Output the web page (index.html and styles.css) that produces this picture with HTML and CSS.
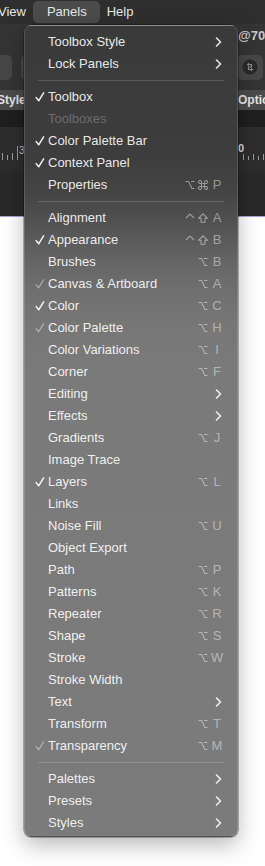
FILE: index.html
```html
<!DOCTYPE html>
<html>
<head>
<meta charset="utf-8">
<link rel="stylesheet" href="styles.css">
</head>
<body>
<div class="app">
  <div class="menubar">
    <span class="mb-item mb-view">View</span>
    <span class="mb-item mb-active">Panels</span>
    <span class="mb-item">Help</span>
  </div>
  <div class="toolbar">
    <div class="doc-title">@70.8%</div>
    <div class="tools">
      <div class="btn btn-a"></div>
      <div class="btn btn-b"></div>
      <div class="spacer"></div>
      <div class="btn btn-icon">
        <svg width="16" height="16" viewBox="0 0 16 16">
          <circle cx="8" cy="8" r="7" fill="#2b2b2b" stroke="#232323" stroke-width="1"/>
          <path d="M5 5.5h4.5v2.5h-3v2.5h4.5M6.5 4v3M9.5 9v3" fill="none" stroke="#8a8a8a" stroke-width="1.1"/>
        </svg>
      </div>
    </div>
  </div>
  <div class="labels">
    <span class="lbl lbl-left">Style</span>
    <span class="lbl lbl-right">Options</span>
  </div>
  <div class="strip"></div>
  <div class="ruler">
    <svg class="ruler-left" width="24" height="45" viewBox="0 0 24 45">
      <g stroke="#9a9a9a" stroke-width="1">
        <line x1="2.5" y1="26" x2="2.5" y2="33"/>
        <line x1="7.5" y1="28" x2="7.5" y2="33"/>
        <line x1="12.5" y1="26" x2="12.5" y2="33"/>
        <line x1="17.5" y1="19" x2="17.5" y2="33"/>
      </g>
      <text x="19" y="27" fill="#c8c8c8" font-size="10" font-family="Liberation Sans, Arial, sans-serif">3</text>
    </svg>
    <div class="spacer"></div>
    <svg class="ruler-right" width="29" height="45" viewBox="0 0 29 45">
      <g stroke="#9a9a9a" stroke-width="1">
        <line x1="1.5" y1="19" x2="1.5" y2="33"/>
        <line x1="7.5" y1="27" x2="7.5" y2="33"/>
        <line x1="12.5" y1="29" x2="12.5" y2="33"/>
        <line x1="17.5" y1="27" x2="17.5" y2="33"/>
        <line x1="22.5" y1="29" x2="22.5" y2="33"/>
        <line x1="27.5" y1="27" x2="27.5" y2="33"/>
      </g>
      <text x="2" y="25" fill="#d8d8d8" font-size="11" font-weight="bold" font-family="Liberation Sans, Arial, sans-serif">0</text>
    </svg>
  </div>
  <div class="canvas-dark"></div>
  <div class="canvas-edge"></div>
  <div class="canvas"></div>
</div>

<svg width="0" height="0" class="defs">
  <defs>
    <path id="opt" d="M0.5 1.5 H3.6 L6.9 8.5 H9.5 M6 1.5 H9.5"/>
    <path id="cmd" d="M3.5 3.5 V2 A1.5 1.5 0 1 0 2 3.5 H8 A1.5 1.5 0 1 0 6.5 2 V8 A1.5 1.5 0 1 0 8 6.5 H2 A1.5 1.5 0 1 0 3.5 8 Z"/>
    <path id="ctl" d="M1 5 L5 1 L9 5"/>
    <path id="sft" d="M5 0.8 L9.5 5.3 H7 V9.3 H3 V5.3 H0.5 Z"/>
    <path id="chv" d="M1.5 1 L5.5 5 L1.5 9"/>
    <path id="chk" d="M1.2 5.6 L3.7 8.8 L8.6 0.8"/>
  </defs>
</svg>

<div class="menu">
  <div class="item"><span class="ck"></span><span class="label">Toolbox Style</span><span class="chev"><svg width="7" height="10" viewBox="0 0 7 10"><use href="#chv"/></svg></span></div>
  <div class="item"><span class="ck"></span><span class="label">Lock Panels</span><span class="chev"><svg width="7" height="10" viewBox="0 0 7 10"><use href="#chv"/></svg></span></div>
  <div class="sep"></div>
  <div class="item"><span class="ck"><svg width="10" height="10" viewBox="0 0 10 10"><use href="#chk"/></svg></span><span class="label">Toolbox</span></div>
  <div class="item disabled"><span class="ck"></span><span class="label">Toolboxes</span></div>
  <div class="item"><span class="ck"><svg width="10" height="10" viewBox="0 0 10 10"><use href="#chk"/></svg></span><span class="label">Color Palette Bar</span></div>
  <div class="item"><span class="ck"><svg width="10" height="10" viewBox="0 0 10 10"><use href="#chk"/></svg></span><span class="label">Context Panel</span></div>
  <div class="item"><span class="ck"></span><span class="label">Properties</span><span class="sc"><span class="mods"><svg viewBox="0 0 10 10"><use href="#opt"/></svg><svg viewBox="0 0 10 10"><use href="#cmd"/></svg></span><span class="key">P</span></span></div>
  <div class="sep"></div>
  <div class="item"><span class="ck"></span><span class="label">Alignment</span><span class="sc"><span class="mods"><svg viewBox="0 0 10 10"><use href="#ctl"/></svg><svg viewBox="0 0 10 10"><use href="#sft"/></svg></span><span class="key">A</span></span></div>
  <div class="item"><span class="ck"><svg width="10" height="10" viewBox="0 0 10 10"><use href="#chk"/></svg></span><span class="label">Appearance</span><span class="sc"><span class="mods"><svg viewBox="0 0 10 10"><use href="#ctl"/></svg><svg viewBox="0 0 10 10"><use href="#sft"/></svg></span><span class="key">B</span></span></div>
  <div class="item"><span class="ck"></span><span class="label">Brushes</span><span class="sc"><span class="mods"><svg viewBox="0 0 10 10"><use href="#opt"/></svg></span><span class="key">B</span></span></div>
  <div class="item"><span class="ck dim"><svg width="10" height="10" viewBox="0 0 10 10"><use href="#chk"/></svg></span><span class="label">Canvas &amp; Artboard</span><span class="sc"><span class="mods"><svg viewBox="0 0 10 10"><use href="#opt"/></svg></span><span class="key">A</span></span></div>
  <div class="item"><span class="ck"><svg width="10" height="10" viewBox="0 0 10 10"><use href="#chk"/></svg></span><span class="label">Color</span><span class="sc"><span class="mods"><svg viewBox="0 0 10 10"><use href="#opt"/></svg></span><span class="key">C</span></span></div>
  <div class="item"><span class="ck dim"><svg width="10" height="10" viewBox="0 0 10 10"><use href="#chk"/></svg></span><span class="label">Color Palette</span><span class="sc"><span class="mods"><svg viewBox="0 0 10 10"><use href="#opt"/></svg></span><span class="key">H</span></span></div>
  <div class="item"><span class="ck"></span><span class="label">Color Variations</span><span class="sc"><span class="mods"><svg viewBox="0 0 10 10"><use href="#opt"/></svg></span><span class="key">I</span></span></div>
  <div class="item"><span class="ck"></span><span class="label">Corner</span><span class="sc"><span class="mods"><svg viewBox="0 0 10 10"><use href="#opt"/></svg></span><span class="key">F</span></span></div>
  <div class="item"><span class="ck"></span><span class="label">Editing</span><span class="chev"><svg width="7" height="10" viewBox="0 0 7 10"><use href="#chv"/></svg></span></div>
  <div class="item"><span class="ck"></span><span class="label">Effects</span><span class="chev"><svg width="7" height="10" viewBox="0 0 7 10"><use href="#chv"/></svg></span></div>
  <div class="item"><span class="ck"></span><span class="label">Gradients</span><span class="sc"><span class="mods"><svg viewBox="0 0 10 10"><use href="#opt"/></svg></span><span class="key">J</span></span></div>
  <div class="item"><span class="ck"></span><span class="label">Image Trace</span></div>
  <div class="item"><span class="ck"><svg width="10" height="10" viewBox="0 0 10 10"><use href="#chk"/></svg></span><span class="label">Layers</span><span class="sc"><span class="mods"><svg viewBox="0 0 10 10"><use href="#opt"/></svg></span><span class="key">L</span></span></div>
  <div class="item"><span class="ck"></span><span class="label">Links</span></div>
  <div class="item"><span class="ck"></span><span class="label">Noise Fill</span><span class="sc"><span class="mods"><svg viewBox="0 0 10 10"><use href="#opt"/></svg></span><span class="key">U</span></span></div>
  <div class="item"><span class="ck"></span><span class="label">Object Export</span></div>
  <div class="item"><span class="ck"></span><span class="label">Path</span><span class="sc"><span class="mods"><svg viewBox="0 0 10 10"><use href="#opt"/></svg></span><span class="key">P</span></span></div>
  <div class="item"><span class="ck"></span><span class="label">Patterns</span><span class="sc"><span class="mods"><svg viewBox="0 0 10 10"><use href="#opt"/></svg></span><span class="key">K</span></span></div>
  <div class="item"><span class="ck"></span><span class="label">Repeater</span><span class="sc"><span class="mods"><svg viewBox="0 0 10 10"><use href="#opt"/></svg></span><span class="key">R</span></span></div>
  <div class="item"><span class="ck"></span><span class="label">Shape</span><span class="sc"><span class="mods"><svg viewBox="0 0 10 10"><use href="#opt"/></svg></span><span class="key">S</span></span></div>
  <div class="item"><span class="ck"></span><span class="label">Stroke</span><span class="sc"><span class="mods"><svg viewBox="0 0 10 10"><use href="#opt"/></svg></span><span class="key">W</span></span></div>
  <div class="item"><span class="ck"></span><span class="label">Stroke Width</span></div>
  <div class="item"><span class="ck"></span><span class="label">Text</span><span class="chev"><svg width="7" height="10" viewBox="0 0 7 10"><use href="#chv"/></svg></span></div>
  <div class="item"><span class="ck"></span><span class="label">Transform</span><span class="sc"><span class="mods"><svg viewBox="0 0 10 10"><use href="#opt"/></svg></span><span class="key">T</span></span></div>
  <div class="item"><span class="ck dim"><svg width="10" height="10" viewBox="0 0 10 10"><use href="#chk"/></svg></span><span class="label">Transparency</span><span class="sc"><span class="mods"><svg viewBox="0 0 10 10"><use href="#opt"/></svg></span><span class="key">M</span></span></div>
  <div class="sep"></div>
  <div class="item"><span class="ck"></span><span class="label">Palettes</span><span class="chev"><svg width="7" height="10" viewBox="0 0 7 10"><use href="#chv"/></svg></span></div>
  <div class="item"><span class="ck"></span><span class="label">Presets</span><span class="chev"><svg width="7" height="10" viewBox="0 0 7 10"><use href="#chv"/></svg></span></div>
  <div class="item"><span class="ck"></span><span class="label">Styles</span><span class="chev"><svg width="7" height="10" viewBox="0 0 7 10"><use href="#chv"/></svg></span></div>
</div>
</body>
</html>
```

FILE: styles.css
```css
html, body {
  margin: 0;
  padding: 0;
  background: #ffffff;
  overflow: hidden;
}

body {
  width: 265px;
  height: 866px;
  position: relative;
  font-family: "Liberation Sans", Arial, sans-serif;
}

.defs {
  position: absolute;
  width: 0;
  height: 0;
}

.app {
  display: flex;
  flex-direction: column;
  height: 866px;
}

/* ---------- menu bar ---------- */
.menubar {
  height: 24px;
  background: #2e2e2e;
  display: flex;
  align-items: center;
  gap: 7px;
  font-size: 13px;
  color: #e6e6e6;
  flex: none;
}

.mb-item {
  line-height: 22px;
}

.mb-view {
  margin-left: -2px;
}

.mb-active {
  background: #4b4b4b;
  border-radius: 5px;
  padding: 0 13px 0 14px;
}

/* ---------- toolbar ---------- */
.toolbar {
  height: 66px;
  background: #343434;
  display: flex;
  flex-direction: column;
  flex: none;
}

.doc-title {
  padding-left: 238px;
  padding-top: 4px;
  height: 16px;
  white-space: nowrap;
  overflow: hidden;
  font-size: 13px;
  font-weight: bold;
  color: #c8c8c8;
  line-height: 16px;
}

.tools {
  display: flex;
  align-items: center;
  margin-top: 10px;
  height: 26px;
}

.spacer {
  flex: 1;
}

.btn {
  height: 25px;
  background: #474747;
  border-radius: 5px;
  flex: none;
}

.btn-a {
  width: 22px;
  margin-left: -10px;
}

.btn-b {
  width: 20px;
  margin-left: 9px;
}

.btn-icon {
  width: 26px;
  margin-right: 2px;
  display: flex;
  align-items: center;
  justify-content: center;
}

/* ---------- labels band ---------- */
.labels {
  height: 20px;
  background: #4b4b4b;
  display: flex;
  justify-content: space-between;
  align-items: center;
  flex: none;
  overflow: hidden;
  font-size: 12px;
  color: #e4e4e4;
  white-space: nowrap;
}

.lbl-left {
  margin-left: -3px;
  font-weight: bold;
}

.lbl-right {
  width: 27px;
  overflow: hidden;
  font-weight: bold;
}

.strip {
  height: 17px;
  background: #1f1f1f;
  flex: none;
}

.ruler {
  height: 45px;
  background: #2d2d2d;
  display: flex;
  flex: none;
}

.ruler svg {
  display: block;
  flex: none;
}

.canvas-dark {
  height: 44px;
  background: #292929;
  flex: none;
}

.canvas-edge {
  height: 1px;
  background: #a9a5d8;
  flex: none;
}

.canvas {
  flex: 1;
  background: #ffffff;
}

/* ---------- popup menu ---------- */
.menu {
  position: absolute;
  left: 24px;
  top: 25px;
  width: 214px;
  box-sizing: border-box;
  border: 1px solid rgba(255, 255, 255, 0.13);
  border-radius: 7px;
  padding: 5px 0 2px;
  background: linear-gradient(to bottom,
    #3a3a3a 0px,
    #3d3d3d 130px,
    #444444 165px,
    #4f4f4f 192px,
    #5a5a5a 214px,
    #656565 236px,
    #6d6d6d 258px,
    #737373 280px,
    #777777 302px,
    #7a7a7a 340px,
    #7b7b7b 100%);
  box-shadow: 0 0 0 0.5px rgba(0, 0, 0, 0.55), 0 8px 22px rgba(0, 0, 0, 0.28);
  font-size: 13px;
  color: rgba(255, 255, 255, 0.9);
}

.item {
  display: grid;
  grid-template-columns: 23px 1fr auto;
  align-items: center;
  height: 22px;
  line-height: 22px;
  padding-right: 14px;
  white-space: nowrap;
}

.item.disabled {
  color: rgba(255, 255, 255, 0.25);
}

.ck {
  display: flex;
  align-items: center;
  height: 22px;
}

.ck svg {
  margin-left: 10px;
  display: block;
  fill: none;
  stroke: rgba(255, 255, 255, 0.92);
  stroke-width: 1.5;
  stroke-linecap: round;
  stroke-linejoin: round;
}

.ck.dim svg {
  stroke: rgba(255, 255, 255, 0.45);
  stroke-width: 1.2;
}

.chev {
  display: flex;
  align-items: center;
  height: 22px;
}

.chev svg {
  display: block;
  margin-right: 1px;
  fill: none;
  stroke: rgba(255, 255, 255, 0.88);
  stroke-width: 1.6;
  stroke-linecap: round;
  stroke-linejoin: round;
}

.sc {
  display: flex;
  align-items: center;
  color: rgba(255, 255, 255, 0.45);
}

.mods {
  display: flex;
  align-items: center;
  gap: 3px;
  margin-right: 3px;
}

.mods svg {
  display: block;
  width: 10px;
  height: 10px;
  fill: none;
  stroke: rgba(255, 255, 255, 0.45);
  stroke-width: 1.1;
  stroke-linejoin: miter;
}

.key {
  width: 12px;
  text-align: center;
  font-size: 13px;
}

.sep {
  height: 1px;
  margin: 5px 13px;
  background: rgba(255, 255, 255, 0.16);
}
```
